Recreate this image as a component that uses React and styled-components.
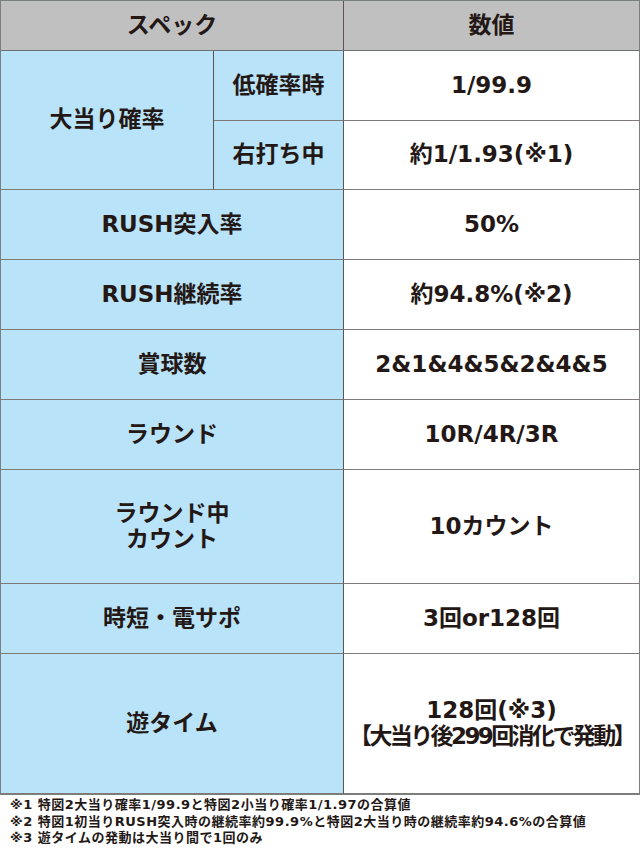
import React from "react";
import styled, { createGlobalStyle } from "styled-components";

const GlobalStyle = createGlobalStyle`
  html, body {
    margin: 0;
    padding: 0;
    background: #ffffff;
  }
  body {
    font-family: "DejaVu Sans", "Noto Sans CJK JP", sans-serif;
    color: #231815;
  }
`;

const SpecWrapper = styled.div`
  width: 640px;
`;

const SpecGrid = styled.div`
  display: grid;
  grid-template-columns: 213px 130px 296px;
  grid-template-rows: 50px 70px 69px 70px 70px 70px 70px 114px 70px 140px;
  border-top: 1px solid #7a7f80;
  border-left: 1px solid #7a7f80;
  border-bottom: 1px solid #7a7f80;
`;

const Cell = styled.div`
  box-sizing: border-box;
  display: flex;
  flex-direction: column;
  align-items: center;
  justify-content: center;
  text-align: center;
  grid-column: ${(p) => p.$col || "auto"};
  grid-row: ${(p) => p.$row || "auto"};
  background: ${(p) =>
    p.$kind === "head" ? "#c0c0c0" : p.$kind === "label" ? "#b9e3f8" : "#ffffff"};
  border-right: 1px solid ${(p) => (p.$last ? "#7a7f80" : "#5e5553")};
  border-bottom: 1px solid ${(p) => (p.$kind === "head" ? "#6c7273" : "#7f7a78")};
  font-size: 23px;
  font-weight: 700;
  line-height: 26px;
  padding-bottom: 2px;
`;

const Line = styled.span`
  display: block;
  white-space: nowrap;
  letter-spacing: ${(p) => p.$tight || "0"};
`;

const Notes = styled.div`
  padding: 2px 0 0 10px;
  font-size: 13px;
  font-weight: 700;
  line-height: 16.5px;
  letter-spacing: 0.5px;
  white-space: nowrap;
`;

const rows = [
  { label: "RUSH突入率", value: ["50%"], row: "4" },
  { label: "RUSH継続率", value: ["約94.8%(※2)"], row: "5" },
  { label: "賞球数", value: ["2&1&4&5&2&4&5"], row: "6" },
  { label: "ラウンド", value: ["10R/4R/3R"], row: "7" },
  { label: ["ラウンド中", "カウント"], value: ["10カウント"], row: "8" },
  { label: "時短・電サポ", value: ["3回or128回"], row: "9" },
  { label: "遊タイム", value: ["128回(※3)", "【大当り後299回消化で発動】"], row: "10" },
];

const notes = [
  "※1 特図2大当り確率1/99.9と特図2小当り確率1/1.97の合算値",
  "※2 特図1初当りRUSH突入時の継続率約99.9%と特図2大当り時の継続率約94.6%の合算値",
  "※3 遊タイムの発動は大当り間で1回のみ",
];

function App() {
  return (
    <SpecWrapper>
      <GlobalStyle />
      <SpecGrid>
        <Cell $kind="head" $col="1 / 3" $row="1">スペック</Cell>
        <Cell $kind="head" $col="3" $row="1" $last>数値</Cell>

        <Cell $kind="label" $col="1" $row="2 / 4">大当り確率</Cell>
        <Cell $kind="label" $col="2" $row="2">低確率時</Cell>
        <Cell $col="3" $row="2" $last>1/99.9</Cell>
        <Cell $kind="label" $col="2" $row="3">右打ち中</Cell>
        <Cell $col="3" $row="3" $last>約1/1.93(※1)</Cell>

        {rows.map((r) => (
          <React.Fragment key={r.row}>
            <Cell $kind="label" $col="1 / 3" $row={r.row}>
              {(Array.isArray(r.label) ? r.label : [r.label]).map((t) => (
                <Line key={t}>{t}</Line>
              ))}
            </Cell>
            <Cell $col="3" $row={r.row} $last>
              {r.value.map((t, i) => (
                <Line key={t} $tight={i > 0 ? "-2.6px" : "0"}>
                  {t}
                </Line>
              ))}
            </Cell>
          </React.Fragment>
        ))}
      </SpecGrid>
      <Notes>
        {notes.map((n) => (
          <div key={n}>{n}</div>
        ))}
      </Notes>
    </SpecWrapper>
  );
}

export default App;
